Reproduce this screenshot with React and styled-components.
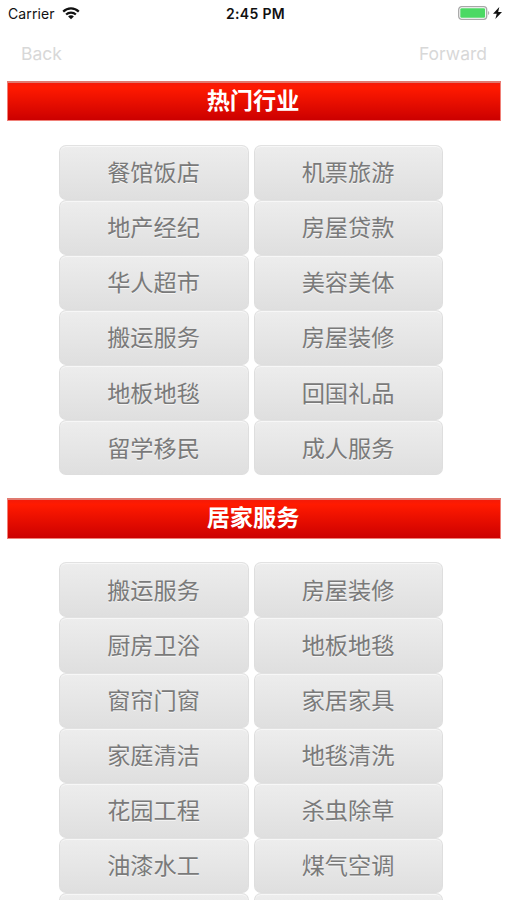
import React from "react";
import styled, { createGlobalStyle } from "styled-components";

const GlobalStyle = createGlobalStyle`
  body {
    margin: 0;
    background: #ffffff;
    font-family: Inter, "Noto Sans CJK SC", sans-serif;
    overflow: hidden;
  }
`;
const Screen = styled.div`
  height: 900px;
  overflow: hidden;
`;
const StatusBar = styled.header`
  display: grid;
  grid-template-columns: 1fr auto 1fr;
  align-items: center;
  height: 26px;
  padding: 0 5px 0 8px;
  color: #111111;
  font-size: 14px;
`;
const Carrier = styled.div`
  display: flex;
  align-items: center;
  gap: 7px;
`;
const CarrierName = styled.span`
  font-size: 14px;
  letter-spacing: 0.1px;
`;
const Clock = styled.div`
  margin-left: 1px;
  font-size: 14px;
  font-weight: 600;
  letter-spacing: 0.3px;
`;
const Power = styled.div`
  display: flex;
  justify-content: flex-end;
  align-items: center;
  gap: 3px;
`;
const NavBar = styled.nav`
  display: flex;
  justify-content: space-between;
  align-items: center;
  height: 54.6px;
  padding: 2px 20px 0 21px;
  box-sizing: border-box;
`;
const NavButton = styled.button`
  border: 0;
  padding: 0;
  background: none;
  color: #d8d8d8;
  font-family: inherit;
  font-size: 17.5px;
  line-height: 20px;
`;
const Section = styled.section`
  height: 417.8px;
`;
const Banner = styled.h2`
  display: flex;
  justify-content: center;
  height: 40.4px;
  margin: 0 6px 0 7px;
  padding-right: 2px;
  box-sizing: border-box;
  border: 1px solid #f08078;
  border-top: 2px solid #e07a70;
  background: linear-gradient(#f51a08, #ff1a00 12%, #cc0000) padding-box;
  color: #ffffff;
  font-size: 23.2px;
  font-weight: 700;
  line-height: 36px;
`;
const Grid = styled.div`
  display: grid;
  grid-template-columns: 190px 189px;
  grid-auto-rows: 55.1px;
  column-gap: 5px;
  padding: 23.6px 0 0 59px;
`;
const Item = styled.button`
  padding: 2px 1px 0 0;
  border: 1px solid #dedede;
  border-top-color: #e2e2e2;
  border-radius: 7px;
  background: linear-gradient(#ededed, #dfdfdf);
  box-shadow: inset 0 1px 0 0 #f7f7f7;
  color: #7a7a7a;
  font-family: inherit;
  font-size: 23.2px;
  line-height: 34px;
  text-shadow: 0 1px 0 #f5f5f5;
`;

const sections = [
  {
    title: "热门行业",
    items: [
      "餐馆饭店", "机票旅游",
      "地产经纪", "房屋贷款",
      "华人超市", "美容美体",
      "搬运服务", "房屋装修",
      "地板地毯", "回国礼品",
      "留学移民", "成人服务",
    ],
  },
  {
    title: "居家服务",
    items: [
      "搬运服务", "房屋装修",
      "厨房卫浴", "地板地毯",
      "窗帘门窗", "家居家具",
      "家庭清洁", "地毯清洗",
      "花园工程", "杀虫除草",
      "油漆水工", "煤气空调",
      "", "",
    ],
  },
];

function WifiIcon() {
  return (
    <svg width="18" height="13" viewBox="0 0 18 13" fill="none" stroke="#111111" strokeWidth="2.2">
      <path d="M1.2 4.6C5.5.3 12.5.3 16.8 4.6" />
      <path d="M4.1 7.5C6.8 4.9 11.2 4.9 13.9 7.5" />
      <path d="M9 12.3L6.1 9.4C7.7 8 10.3 8 11.9 9.4Z" fill="#111111" stroke="none" />
    </svg>
  );
}

function BatteryIcon() {
  return (
    <svg width="32" height="14" viewBox="0 0 32 14">
      <rect x="0.7" y="0.7" width="28" height="12.6" rx="3" fill="#ffffff" stroke="#a8a8a8" strokeWidth="1.3" />
      <rect x="2.3" y="2.3" width="24.8" height="9.4" rx="1.3" fill="#4cd964" />
      <path d="M30.1 5v4c1.5-.5 1.5-3.5 0-4Z" fill="#a8a8a8" />
    </svg>
  );
}

function BoltIcon() {
  return (
    <svg width="9" height="12" viewBox="0 0 8 12" preserveAspectRatio="none">
      <path d="M5.6 0L0 6.7h3.3L2.1 12 8 4.9H4.6Z" fill="#111111" />
    </svg>
  );
}

class App extends React.Component {
  render() {
    return (
      <Screen>
        <GlobalStyle />
        <StatusBar>
          <Carrier>
            <CarrierName>Carrier</CarrierName>
            <WifiIcon />
          </Carrier>
          <Clock>2:45 PM</Clock>
          <Power>
            <BatteryIcon />
            <BoltIcon />
          </Power>
        </StatusBar>
        <NavBar>
          <NavButton disabled>Back</NavButton>
          <NavButton disabled>Forward</NavButton>
        </NavBar>
        {sections.map((section) => (
          <Section key={section.title}>
            <Banner>{section.title}</Banner>
            <Grid>
              {section.items.map((item, i) => (
                <Item key={i}>{item}</Item>
              ))}
            </Grid>
          </Section>
        ))}
      </Screen>
    );
  }
}

export default App;
